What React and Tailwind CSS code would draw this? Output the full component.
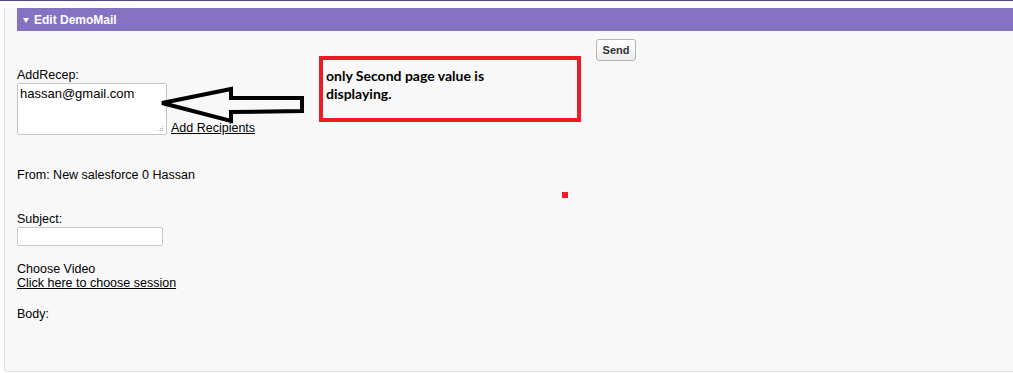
import React from "react";

function Annotations() {

  return (

    <>

      <div className="absolute left-[319px] top-[55px] w-[262px] h-[66px] border-4 border-[#ed1c24] pl-[3px] pt-[7px]">

        <p className="font-['Lato',sans-serif] font-bold text-[14px] leading-[18px] text-black">

          only Second page value is
          <br />
          displaying.

        </p>

      </div>

      <svg
        className="absolute left-[150px] top-[78px]"
        width="165"
        height="55"
        viewBox="150 78 165 55"
      >

        <polygon
          points="162,102 231,88 231,97 302,97 302,110 231,111 231,120"
          fill="none"
          stroke="#000"
          strokeWidth="4"
          strokeLinejoin="miter"
        />

      </svg>

      <div className="absolute left-[562px] top-[191px] w-[6px] h-[6px] bg-[#ed1c24]" />

    </>

  );

}

function Grip() {

  // little dotted resize corner of the textarea
  return (

    <svg className="absolute right-[3px] bottom-[3px]" width="6" height="6" viewBox="0 0 6 6">

      <rect x="4" y="0" width="1" height="1" fill="#aaa" />
      <rect x="2" y="2" width="1" height="1" fill="#aaa" />
      <rect x="4" y="2" width="1" height="1" fill="#aaa" />
      <rect x="0" y="4" width="1" height="1" fill="#aaa" />
      <rect x="2" y="4" width="1" height="1" fill="#aaa" />
      <rect x="4" y="4" width="1" height="1" fill="#aaa" />

    </svg>

  );

}

export default function App() {

  return (

    <div className="relative w-[1013px] h-[373px] overflow-hidden bg-white border-t border-[#54478f] font-['Liberation_Sans',Arial,sans-serif] text-[12.5px] leading-[14px] text-black">

      <div className="mt-[7px] ml-[4px] h-[364px] bg-[#f8f8f8] border-l border-b border-[#e2e2e2] rounded-bl-[3px] pl-[12px]">

        {/* section header */}
        <div className="h-[23px] bg-[#8572c2] flex items-center pl-[6px] gap-[5px] text-white font-bold text-[12px]">

          <span className="w-0 h-0 border-l-[3.5px] border-r-[3.5px] border-t-[5px] border-l-transparent border-r-transparent border-t-white mt-[1px]" />

          <span>Edit DemoMail</span>

        </div>

        <div className="mt-[8px] pl-[579px]">

          <button className="w-[40px] h-[22px] rounded-[3px] border border-[#b5b5b5] bg-gradient-to-b from-white to-[#ececec] text-[#333] font-bold text-[11px]">

            Send

          </button>

        </div>

        <div className="mt-[7px]">AddRecep:</div>

        <div className="mt-[1px] flex items-end gap-[4px]">

          <div className="relative">

            <textarea
              defaultValue="hassan@gmail.com"
              className="block w-[150px] h-[52px] resize-none bg-white border border-[#c5c5c5] rounded-[2px] px-[2px] py-[2px] text-[13px] leading-[15px] font-['Liberation_Sans',Arial,sans-serif] outline-none"
            />

            <Grip />

          </div>

          <a href="#" className="underline">

            Add Recipients

          </a>

        </div>

        <div className="mt-[33px]">From: New salesforce 0 Hassan</div>

        <div className="mt-[30px]">Subject:</div>

        <input className="mt-[1px] block w-[146px] h-[19px] bg-white border border-[#c8c8c8] rounded-[2px] outline-none" />

        <div className="mt-[16px]">Choose Video</div>

        <a href="#" className="block w-fit underline">Click here to choose session</a>

        <div className="mt-[17px]">Body:</div>

      </div>

      <Annotations />

    </div>

  );

}
